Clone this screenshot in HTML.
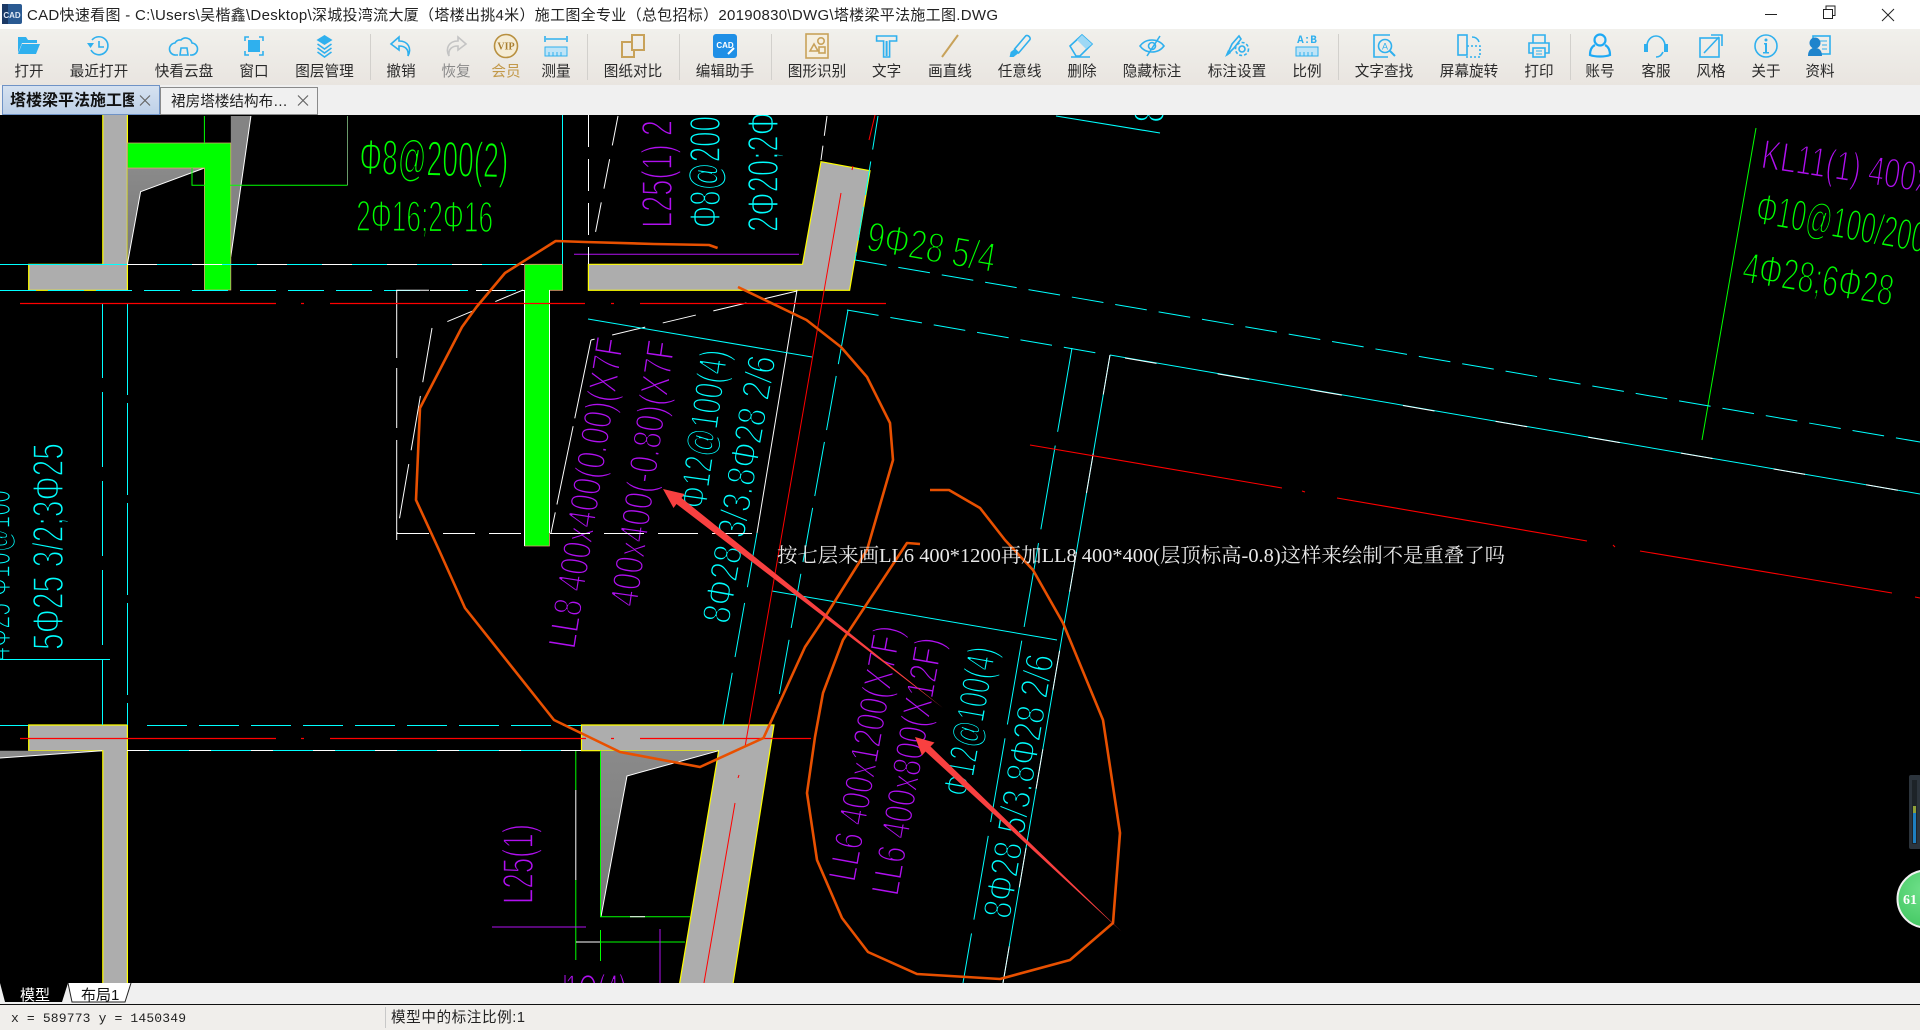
<!DOCTYPE html>
<html><head><meta charset="utf-8"><title>CAD快速看图</title>
<style>
html,body{margin:0;padding:0;background:#000;width:1920px;height:1030px;overflow:hidden}
svg{display:block;position:absolute;left:0;top:0}
.ui{font-family:"Liberation Sans","Noto Sans CJK SC",sans-serif;font-size:14.6px;fill:#2a2a2a;text-anchor:middle}
.cad{font-family:"Liberation Sans",sans-serif;stroke:#000;stroke-width:1.7}
.c{fill:#0ff}.p{fill:#b010f0}.g{fill:#0f0}
.i{fill:none;stroke:#2fb0ee;stroke-width:1.6}
.f{fill:#2fb0ee;stroke:none}
</style></head><body>
<svg width="1920" height="1030" viewBox="0 0 1920 1030">
<defs>
<linearGradient id="tb" x1="0" y1="0" x2="0" y2="1"><stop offset="0" stop-color="#f1f0ec"/><stop offset="1" stop-color="#e9e5e0"/></linearGradient>
<linearGradient id="tab" x1="0" y1="0" x2="0" y2="1"><stop offset="0" stop-color="#d6e2f0"/><stop offset="1" stop-color="#bdd0e8"/></linearGradient>
<linearGradient id="dg" x1="0" y1="0" x2="0" y2="1"><stop offset="0" stop-color="#8a8a8a"/><stop offset="1" stop-color="#777"/></linearGradient>
<radialGradient id="ball" cx=".45" cy=".35" r=".8"><stop offset="0" stop-color="#6fe08a"/><stop offset="1" stop-color="#3cc45c"/></radialGradient>
<clipPath id="cv"><rect x="0" y="115" width="1920" height="868"/></clipPath>
</defs>
<rect width="1920" height="1030" fill="#000"/>

<!-- DRAWING -->
<g clip-path="url(#cv)">
<!-- cad text -->
<g class="cad">
<text class="g" transform="translate(359,174) rotate(1.5)" font-size="50" textLength="149" lengthAdjust="spacingAndGlyphs">Φ8@200(2)</text>
<text class="g" transform="translate(356,231) rotate(0.5)" font-size="44" textLength="137" lengthAdjust="spacingAndGlyphs">2Φ16;2Φ16</text>
<text class="g" transform="translate(865,250) rotate(10)" font-size="42" textLength="130" lengthAdjust="spacingAndGlyphs">9Φ28 5/4</text>
<text class="p" transform="translate(672,228) rotate(-90)" font-size="44" textLength="108" lengthAdjust="spacingAndGlyphs">L25(1) 2</text>
<text class="c" transform="translate(720,228) rotate(-90)" font-size="44" textLength="112" lengthAdjust="spacingAndGlyphs">Φ8@200</text>
<text class="c" transform="translate(778,232) rotate(-90)" font-size="44" textLength="120" lengthAdjust="spacingAndGlyphs">2Φ20;2Φ</text>
<text class="c" transform="translate(1164,123) rotate(-90)" font-size="44" textLength="20" lengthAdjust="spacingAndGlyphs">8</text>
<text class="p" transform="translate(575,650) rotate(-81)" font-size="40" textLength="314" lengthAdjust="spacingAndGlyphs">LL8 400x400(0.00)(X7F</text>
<text class="p" transform="translate(637,608) rotate(-81.8)" font-size="40" textLength="268" lengthAdjust="spacingAndGlyphs">400x400(-0.80)(X7F</text>
<text class="c" transform="translate(706,510) rotate(-82)" font-size="40" textLength="160" lengthAdjust="spacingAndGlyphs">Φ12@100(4)</text>
<text class="c" transform="translate(729,625) rotate(-80)" font-size="40" textLength="271" lengthAdjust="spacingAndGlyphs">8Φ28 3/3.8Φ28 2/6</text>
<text class="c" transform="translate(63,650) rotate(-90)" font-size="44" textLength="207" lengthAdjust="spacingAndGlyphs">5Φ25 3/2;3Φ25</text>
<text class="c" transform="translate(10,660) rotate(-90)" font-size="40" textLength="170" lengthAdjust="spacingAndGlyphs">4Φ25 Φ10@100</text>
<text class="p" transform="translate(533,904) rotate(-90)" font-size="44" textLength="80" lengthAdjust="spacingAndGlyphs">L25(1)</text>
<text class="p" x="565" y="1005" font-size="44" textLength="62" lengthAdjust="spacingAndGlyphs">1O(4)</text>
<text class="p" transform="translate(855,883) rotate(-79.6)" font-size="40" textLength="259" lengthAdjust="spacingAndGlyphs">LL6 400x1200(X7F)</text>
<text class="p" transform="translate(898,897) rotate(-80)" font-size="40" textLength="261" lengthAdjust="spacingAndGlyphs">LL6 400x800(X12F)</text>
<text class="c" transform="translate(970,798) rotate(-80)" font-size="40" textLength="151" lengthAdjust="spacingAndGlyphs">Φ12@100(4)</text>
<text class="c" transform="translate(1010,920) rotate(-80.5)" font-size="40" textLength="267" lengthAdjust="spacingAndGlyphs">8Φ28 5/3.8Φ28 2/6</text>
<text class="p" transform="translate(1760,168) rotate(8.5)" font-size="42" textLength="170" lengthAdjust="spacingAndGlyphs">KL11(1) 400x</text>
<text class="g" transform="translate(1754,223) rotate(10)" font-size="44" textLength="172" lengthAdjust="spacingAndGlyphs">Φ10@100/200</text>
<text class="g" transform="translate(1741,282) rotate(9)" font-size="44" textLength="152" lengthAdjust="spacingAndGlyphs">4Φ28;6Φ28</text>
</g>
<!-- gray shapes -->
<g fill="#adadad" stroke="#ff0" stroke-width="1.2">
<polygon points="102.8,112 127.4,112 127.4,290.3 28.7,290.3 28.7,264.3 102.8,264.3"/>
<polygon points="821,161.7 870,170.7 849.6,290.3 588.4,290.3 588.4,264.3 802.5,264.3"/>
<polygon points="28.7,725 127.4,725 127.4,990 102.8,990 102.8,750.7 28.7,750.7"/>
<polygon points="581.5,725 774,725 732,990 678.5,990 718.7,750.7 581.5,750.7"/>
</g>
<polygon points="127.4,168 204.4,168 140.6,191.7 127.4,264" fill="url(#dg)"/>
<polyline points="204.4,168 140.6,191.7 127.4,264" fill="none" stroke="#fff" stroke-width="1"/>
<line x1="127.4" y1="168" x2="204.4" y2="168" stroke="#e0a070"/>
<polygon points="230.8,116 250.9,116 230.8,256.7" fill="#848484"/>
<line x1="250.9" y1="116" x2="230.8" y2="256.7" stroke="#fff"/>
<polygon points="0,750.7 102,750.7 0,758" fill="#8a8a8a"/>
<line x1="0" y1="758" x2="102" y2="750.7" stroke="#fff"/>
<polygon points="600.5,750.7 718.7,750.7 627,776 601,916.7" fill="url(#dg)"/>
<polyline points="718.7,750.7 627,776 601,916.7" fill="none" stroke="#fff"/>

<!-- green fills -->
<g fill="#0f0" stroke="#e0a070" stroke-width=".8">
<polygon points="127.4,143 230.8,143 230.8,290 204.4,290 204.4,168 127.4,168"/>
<polygon points="524.7,264.3 562.6,264.3 562.6,290.3 549.4,290.3 549.4,546 524.7,546"/>
</g>
<line x1="524.5" y1="290" x2="524.5" y2="546" stroke="#fff"/>
<line x1="549.5" y1="290" x2="549.5" y2="533" stroke="#fff"/>

<!-- thin green -->
<g fill="none" stroke="#0f0" stroke-width="1">
<path d="M204.4,116V143M192,168V185.3H347.5"/>
<path d="M347.5,116V185.3" stroke="#6a9a6a"/>
<path d="M575.8,750.7V790M575.8,880V960M600.5,750.7V916.7H690M600.5,930V961M575.8,942H685"/>
<path d="M1756,128L1702,440"/>
</g>
<line x1="575.8" y1="790" x2="575.8" y2="880" stroke="#fff"/>
<line x1="630" y1="916.7" x2="645" y2="916.7" stroke="#fff"/>
<line x1="576" y1="942" x2="600" y2="942" stroke="#fff"/>

<!-- purple lines -->
<g stroke="#b010f0" stroke-width="1" fill="none">
<path d="M574,254.3H799M492,927H586M660,929V984M565,975V984"/>
</g>

<!-- cyan / white horizontals -->
<line x1="0" y1="264.5" x2="524" y2="264.5" stroke="#0ff"/>
<line x1="127" y1="264.5" x2="524" y2="264.5" stroke="#fff" stroke-dasharray="30 35"/>
<line x1="0" y1="290.5" x2="524" y2="290.5" stroke="#0ff" stroke-dasharray="36 12"/>
<line x1="0" y1="725.5" x2="28" y2="725.5" stroke="#0ff"/>
<line x1="147" y1="725.5" x2="581" y2="725.5" stroke="#0ff" stroke-dasharray="40 12"/>
<line x1="127" y1="750.5" x2="581" y2="750.5" stroke="#0ff"/>
<line x1="127" y1="750.5" x2="581" y2="750.5" stroke="#fff" stroke-dasharray="22 40"/>
<line x1="0" y1="659.5" x2="110" y2="659.5" stroke="#0ff"/>
<!-- verticals -->
<line x1="127.5" y1="303" x2="127.5" y2="725" stroke="#0ff" stroke-dasharray="92 8"/>
<line x1="102.5" y1="303" x2="102.5" y2="725" stroke="#0ff" stroke-dasharray="75 14"/>
<line x1="562.5" y1="115" x2="562.5" y2="264" stroke="#0ff"/>
<line x1="588.5" y1="115" x2="588.5" y2="264" stroke="#fff" stroke-dasharray="32 12"/>

<!-- white box -->
<g stroke="#fff" fill="none" stroke-width="1">
<path d="M396.7,540V290.3H430" stroke-dasharray="100 12 60 10"/>
<path d="M397,533.5H524" stroke-dasharray="32 14"/>
<path d="M550,533.5H757" stroke-dasharray="40 14"/>
<path d="M430,290.5H524" stroke-dasharray="30 16"/>
<path d="M523,290L432,328" stroke-dasharray="30 22"/>
<path d="M432,328L397,533" stroke-dasharray="55 14"/>
<path d="M797,291L591,340" stroke-dasharray="34 18"/>
<path d="M591,340L551,533" stroke-dasharray="80 8"/>
<path d="M618,116L594,240" stroke-dasharray="30 14"/>
<path d="M797,290L757,533"/>
</g>
<path d="M588,319L812,357" stroke="#0ff" fill="none"/>

<!-- cyan diagonals -->
<g stroke="#0ff" fill="none" stroke-width="1">
<path d="M848,310L776,713" stroke-dasharray="55 12"/>
<path d="M757,533L723,725" stroke-dasharray="55 16"/>
<path d="M878,116L855,260" stroke-dasharray="34 12"/>
<path d="M827,116L821,160" stroke="#fff" stroke-dasharray="20 10"/>
<path d="M1056,116L1160,133" stroke-width="1.1"/>
<path d="M855,260L1920,442" stroke-dasharray="32 12"/>
<path d="M847,310L1097,353" stroke-dasharray="32 12"/>
<path d="M1072,348L963,983" stroke-dasharray="85 14"/>
<path d="M1110,355L1003,983"/>
<path d="M1110,355L1920,494"/>
<path d="M772,591L1057,640"/>
</g>
<path d="M1110,355L1003,983" stroke="#fff" stroke-dasharray="40 60" fill="none"/>
<path d="M1125,358L1920,494" stroke="#fff" stroke-dasharray="32 62" fill="none"/>

<!-- reds -->
<g stroke="#f00" fill="none" stroke-width="1">
<path d="M20,303.5H276M301,303.5H304M330,303.5H585M611,303.5H614M640,303.5H886" stroke-width="1.2"/>
<path d="M20,738.5H276M301,738.5H304M330,738.5H586M611,738.5H614M640,738.5H811" stroke-width="1.2"/>
<path d="M875,115L869,140M853,166L852,170M841,193L745,747M739,775L738,778M735,803L704,983"/>
<path d="M1030,445L1282,488M1302,491L1305,492M1337,498L1587,541M1613,545L1615,547M1640,551L1892,593M1915,597L1920,598" stroke-width="1.1"/>
</g>

<!-- orange curves -->
<g fill="none" stroke="#e85000" stroke-linejoin="round">
<polyline stroke-width="2.6" points="717.6,248 709,245 654,244 585.5,242 555.7,241 505,273 476.5,307 462,327 420,408 416,500 439,550 465,608 554,720 620,752 700,767 763.5,738 805,647 825,617 867,550 893,460 890,423 867,377 841,347 806.5,320 738,287"/>
<polyline stroke-width="2.6" points="930,490 949,490 980,508 1005,540 1033,570 1063,623 1103,720 1120,833 1113,923 1070,960 1000,979 917,974 868,952 842,918 817,860 807,793 815,737 823,693 843,640 907,543 920,544"/>
</g>

<!-- red arrows -->
<polygon fill="#f94040" points="663,489 684.5,494 681.5,498 943,708 676.5,504 673.5,508"/>
<polygon fill="#f94040" points="915,737 934.5,742.5 930.5,746.5 1122,932 925.5,751.5 922,755.5"/>

<text x="777" y="562" font-family="'Liberation Serif','Noto Serif CJK SC',serif" font-size="20" fill="#e8e8e8" textLength="728" lengthAdjust="spacingAndGlyphs">按七层来画LL6 400*1200再加LL8 400*400(层顶标高-0.8)这样来绘制不是重叠了吗</text>

<!-- meter -->
<rect x="1909" y="775" width="12" height="74" rx="2" fill="#2c343c"/>
<rect x="1912" y="780" width="5" height="64" fill="#1d2328"/>
<rect x="1913" y="806" width="3" height="7" fill="#8fa03a"/>
<rect x="1913" y="813" width="3" height="30" fill="#1e7fc0"/>
<!-- ball -->
<circle cx="1926" cy="899" r="28.5" fill="url(#ball)" stroke="#f2f2f2" stroke-width="2"/>
<text x="1903" y="904" font-family="'Liberation Serif',serif" font-weight="bold" font-size="14" fill="#fff">61</text>
</g>

<!-- TITLE BAR -->
<rect x="0" y="0" width="1920" height="29" fill="#fff"/>
<rect x="2" y="4" width="20" height="20" rx="2" fill="#2a5a92"/>
<rect x="2" y="4" width="6" height="20" fill="#1c3a66"/>
<text x="12" y="18" font-family="'Liberation Sans',sans-serif" font-weight="bold" font-size="8" fill="#dfe8f5" text-anchor="middle">CAD</text>
<text x="27" y="20" font-family="'Liberation Sans','Noto Sans CJK SC',sans-serif" font-size="15" fill="#222" textLength="971">CAD快速看图 - C:\Users\吴楷鑫\Desktop\深城投湾流大厦（塔楼出挑4米）施工图全专业（总包招标）20190830\DWG\塔楼梁平法施工图.DWG</text>
<g stroke="#222" fill="none" stroke-width="1">
<path d="M1765,14.5H1777"/>
<path d="M1823.5,18.5h9v-9h-9zM1826,9v-3h9v9.500h-2.500"/>
<path d="M1882,9L1894,21M1894,9L1882,21"/>
</g>

<!-- TOOLBAR -->
<rect x="0" y="29" width="1920" height="56" fill="url(#tb)"/>
<g stroke="#d2d0cc"><path d="M370.5,34V80M587.5,34V80M679.5,34V80M771.5,34V80M1338.5,34V80M1570.5,34V80"/></g>

<g class="ui">
<text x="29" y="76">打开</text><text x="99" y="76">最近打开</text><text x="184" y="76">快看云盘</text><text x="254" y="76">窗口</text><text x="324.5" y="76">图层管理</text>
<text x="401" y="76">撤销</text><text x="456" y="76" style="fill:#888">恢复</text><text x="506" y="76" style="fill:#c2994a">会员</text><text x="556" y="76">测量</text>
<text x="633" y="76">图纸对比</text><text x="725" y="76">编辑助手</text><text x="817" y="76">图形识别</text><text x="886.6" y="76">文字</text><text x="950" y="76">画直线</text>
<text x="1019.6" y="76">任意线</text><text x="1082" y="76">删除</text><text x="1152" y="76">隐藏标注</text><text x="1237" y="76">标注设置</text><text x="1307" y="76">比例</text>
<text x="1384" y="76">文字查找</text><text x="1469" y="76">屏幕旋转</text><text x="1539" y="76">打印</text><text x="1600" y="76">账号</text><text x="1656" y="76">客服</text><text x="1711" y="76">风格</text><text x="1766" y="76">关于</text><text x="1820" y="76">资料</text>
</g>

<!-- icons -->
<g transform="translate(29,46)"><path class="f" d="M-11,-9h8l2,3h9v3h-15l-4,10z"/><path class="f" d="M-7,-2h18l-4,10h-18z"/></g>
<g transform="translate(99,46)"><path class="i" d="M-7,-6A9,9 0 1 1 -8,4" /><path class="f" d="M-12,-3h7l-3.5,5z"/><path class="i" d="M0,-5V1H5"/></g>
<g transform="translate(184,46)"><path class="i" d="M-6,9H-8A6,6 0 0 1 -9,-3A6,6 0 0 1 -3,-6A6.500,6.500 0 0 1 8,-3A6,6 0 0 1 7,9H6"/><path class="i" d="M-4,9L-3,2H3L4,9z"/></g>
<g transform="translate(254,46)"><path class="i" d="M-9,-5V-9H-5M5,-9H9V-5M9,5V9H5M-5,9H-9V5"/><rect class="f" x="-6" y="-6" width="12" height="12"/></g>
<g transform="translate(324.5,46)"><path class="f" d="M0,-11L8,-6L0,-1L-8,-6z"/><path class="i" d="M-7,-2L0,3L7,-2M-7,2L0,7L7,2M-7,6L0,11L7,6"/></g>
<g transform="translate(401,46)"><path class="i" d="M-2,-9L-10,-2L-2,4V0C4,0 8,3 7,10C11,2 7,-5 -2,-5z" stroke="#55bdf0"/></g>
<g transform="translate(456,46)"><path class="i" d="M2,-9L10,-2L2,4V0C-4,0 -8,3 -7,10C-11,2 -7,-5 2,-5z" style="stroke:#c4c4c4"/></g>
<g transform="translate(506,46)"><circle r="11.500" fill="#f5ecd5" stroke="#b89040" stroke-width="1.600"/><text y="3.500" text-anchor="middle" font-family="'Liberation Serif',serif" font-weight="bold" font-size="10" fill="#a87e30">VIP</text></g>
<g transform="translate(556,46)"><path class="i" d="M-11,-10V-4M11,-10V-4M-10,-7H10"/><rect x="-11" y="1" width="22" height="9" fill="#bfe4f7" stroke="#2fb0ee"/><path class="i" d="M-7,6V10M-3,6V10M1,6V10M5,6V10" style="stroke-width:1"/></g>
<g transform="translate(633,46)" fill="none" stroke="#c8a25a" stroke-width="2"><rect x="-1" y="-11" width="12" height="15"/><path d="M-1,-4H-11V11H1V4"/></g>
<g transform="translate(725,46)"><rect x="-12" y="-12" width="24" height="24" rx="3" fill="#1f8fe6"/><text y="2" text-anchor="middle" font-family="'Liberation Sans',sans-serif" font-weight="bold" font-size="8" fill="#fff">CAD</text><path d="M3,8L9,2" stroke="#fff" stroke-width="2"/></g>
<g transform="translate(817,46)" fill="none" stroke="#c8a25a" stroke-width="1.600"><rect x="-11" y="-12" width="22" height="24" fill="#f5efe0"/><path d="M-7,5L-3,-2L1,5z"/><circle cx="4" cy="-5" r="3.200"/><rect x="2" y="1" width="6" height="6"/></g>
<g transform="translate(886.600,46)"><path class="i" d="M-10,-10H10V-5H3V11H-3V-5H-10z"/><path class="f" d="M-1,-5H1V10H-1z"/></g>
<line x1="942" y1="57" x2="958" y2="35" stroke="#c8a25a" stroke-width="2"/>
<g transform="translate(1019.600,46)"><path class="i" d="M-5,3L6,-10C8,-12 12,-8 10,-6L-1,7z"/><path class="f" d="M-5,3L-1,7L-6,11H-10L-9,6z"/></g>
<g transform="translate(1082,46)"><path class="i" d="M-12,0L0,-11L10,-2L-2,10H-6z"/><path class="f" d="M-5,-6L0,-11L10,-2L4,3z" style="fill:#9ed8f5"/><path class="i" d="M-11,11H8"/></g>
<g transform="translate(1152,46)"><path class="i" d="M-12,0C-6,-8 6,-8 12,0C6,8 -6,8 -12,0z"/><circle class="i" r="3.500"/><path class="i" d="M-5,10L8,-10"/></g>
<g transform="translate(1237,46)"><path class="i" d="M-10,9L-5,-2L2,-10L4,-7L-3,2z"/><path class="f" d="M-12,11L-9,4L-6,7z"/><circle class="i" cx="5" cy="3" r="3"/><circle class="i" cx="5" cy="3" r="6.500" stroke-dasharray="3 2"/></g>
<g transform="translate(1307,46)"><text y="-3" text-anchor="middle" font-family="'Liberation Mono',monospace" font-weight="bold" font-size="11" fill="#2fb0ee">A:B</text><rect x="-11" y="1" width="22" height="9" fill="#bfe4f7" stroke="#2fb0ee"/><path class="i" d="M-7,6V10M-3,6V10M1,6V10M5,6V10" style="stroke-width:1"/></g>
<g transform="translate(1384,46)"><path class="i" d="M6,-11H-10V11H4"/><circle class="i" cx="1" cy="0" r="6.500"/><path class="i" d="M6,5L11,10" style="stroke-width:2"/><text x="1" y="3.500" text-anchor="middle" font-family="'Liberation Sans',sans-serif" font-size="9" fill="#2fb0ee">A</text></g>
<g transform="translate(1469,46)"><rect class="i" x="-11" y="-11" width="9" height="20" /><path class="i" d="M-2,0H11V11H-5" stroke-dasharray="2 2"/><path class="i" d="M3,-9C7,-9 9,-7 10,-4"/></g>
<g transform="translate(1539,46)"><path class="i" d="M-6,-3V-11H6V-3M-6,7H-10V-3H10V7H6"/><rect class="i" x="-6" y="2" width="12" height="9" fill="#bfe4f7"/><path class="i" d="M-3,5H3M-3,8H3" style="stroke-width:1"/></g>
<g transform="translate(1600,46)"><circle class="i" cy="-6" r="5.500" style="stroke-width:2.200;stroke:#1da9f5"/><path class="i" d="M-5,-1C-9,1 -10,5 -10,9C-5,11 5,11 10,9C10,5 9,1 5,-1" style="stroke-width:2.200;stroke:#1da9f5"/></g>
<g transform="translate(1656,46)"><path class="i" d="M-9,0A9,10 0 0 1 9,0M7,6C5,10 3,11 0,11"/><path class="f" d="M-12,-2H-8V6H-12zM8,-2H12V6H8z"/></g>
<g transform="translate(1711,46)"><rect class="i" x="-11" y="-8" width="19" height="19"/><path class="i" d="M-7,7L8,-9M0,-11H11V0" /></g>
<g transform="translate(1766,46)"><circle class="i" r="11"/><circle class="f" cy="-6" r="1.500"/><path class="f" d="M-2,-3H1V6H3V7.500H-3V6H-1V-1.500H-2z"/></g>
<g transform="translate(1820,46)"><rect class="i" x="-7" y="-10" width="17" height="18" /><path class="i" d="M0,-5H7M2,-1H7M2,3H7" style="stroke-width:1"/><circle class="f" cx="-5" cy="-3" r="5.500" style="fill:#1f84cc"/><path class="f" d="M-12,10C-12,4 -9,2 -5,2C-1,2 2,4 2,10z" style="fill:#1f84cc"/></g>

<!-- TAB BAR -->
<rect x="0" y="85" width="1920" height="30" fill="#f0f0f0"/>
<rect x="2.500" y="85.500" width="157" height="29" fill="url(#tab)" stroke="#6f93c6"/>
<rect x="160.500" y="87.500" width="157" height="27" fill="#f0f0f0" stroke="#8a8a8a"/>
<svg x="3" y="86" width="131" height="28"><text x="7" y="19.500" font-family="'Liberation Sans','Noto Sans CJK SC',sans-serif" font-weight="bold" font-size="16" fill="#111">塔楼梁平法施工图</text></svg>
<text x="171" y="106" font-family="'Liberation Sans','Noto Sans CJK SC',sans-serif" font-size="14.600" fill="#222">裙房塔楼结构布…</text>
<g stroke="#666" stroke-width="1.200"><path d="M140,95.500L150,105.500M150,95.500L140,105.500M298,95.500L308,105.500M308,95.500L298,105.500"/></g>

<!-- BOTTOM -->
<rect x="0" y="983" width="1920" height="21" fill="#f0f0f0"/>
<path d="M0,983L5,1002H62L68,983z" fill="#000"/>
<path d="M68,983L72,1002H125L131,983" fill="#fff" stroke="#222"/>
<text x="20" y="1000" font-family="'Liberation Sans','Noto Sans CJK SC',sans-serif" font-size="15" fill="#fff">模型</text>
<text x="81" y="1000" font-family="'Liberation Sans','Noto Sans CJK SC',sans-serif" font-size="15" fill="#111">布局1</text>
<rect x="0" y="1004" width="1920" height="1" fill="#111"/>
<rect x="0" y="1005" width="1920" height="25" fill="#f0eeeb"/>
<rect x="385" y="1007" width="1" height="21" fill="#c8c8c8"/>
<text x="11" y="1022" font-family="'Liberation Mono',monospace" font-size="13" fill="#222" textLength="175">x = 589773 y = 1450349</text>
<text x="391" y="1022" font-family="'Liberation Sans','Noto Sans CJK SC',sans-serif" font-size="14.600" fill="#222" textLength="134">模型中的标注比例:1</text>
</svg>
</body></html>
